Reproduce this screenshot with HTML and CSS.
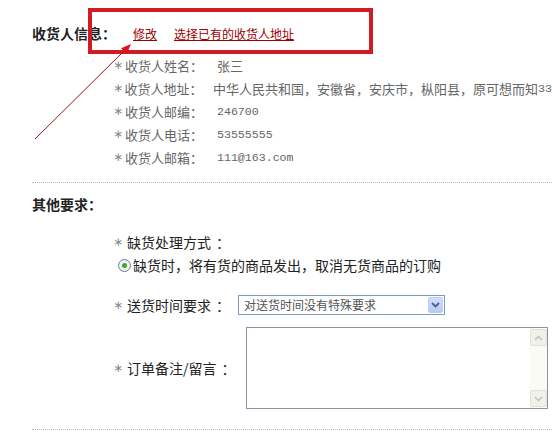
FILE: index.html
```html
<!DOCTYPE html>
<html lang="zh-CN">
<head>
	<meta charset="UTF-8">
	<title>订单信息</title>
	<link rel="stylesheet" href="styles.css">
</head>
<body>
	<div id="page">
		<div class="section">
			<div class="head">
				<span class="title">收货人信息：</span>
				<a href="javascript:;" class="link">修改</a>
				<a href="javascript:;" class="link">选择已有的收货人地址</a>
			</div>
			<ul class="info">
				<li><span class="star">∗</span><span class="key">收货人姓名：</span>张三</li>
				<li><span class="star">∗</span><span class="key">收货人地址：</span>中华人民共和国，安徽省，安庆市，枞阳县，原可想而知<span class="num">33</span></li>
				<li><span class="star">∗</span><span class="key">收货人邮编：</span><span class="num">246700</span></li>
				<li><span class="star">∗</span><span class="key">收货人电话：</span><span class="num">53555555</span></li>
				<li><span class="star">∗</span><span class="key">收货人邮箱：</span><span class="num">111@163.com</span></li>
			</ul>
		</div>
		<div class="section">
			<p class="title other">其他要求：</p>
			<div class="field lack-row">
				<span class="star">∗</span>缺货处理方式<span class="colon">：</span>
			</div>
			<div class="field radio-row">
				<span class="radio"><i></i></span>缺货时，将有货的商品发出，取消无货商品的订购
			</div>
			<div class="field time-row">
				<span class="label time"><span class="star">∗</span>送货时间要求<span class="colon">：</span></span>
				<div class="select">
					<span class="select-text">对送货时间没有特殊要求</span>
					<span class="select-btn">
						<svg width="9" height="6" viewBox="0 0 9 6"><path d="M1 1 L4.5 4.5 L8 1" fill="none" stroke="#4d6185" stroke-width="1.8"/></svg>
					</span>
				</div>
			</div>
			<div class="field note-row">
				<span class="label note"><span class="star">∗</span>订单备注/留言<span class="colon">：</span></span>
				<div class="textbox">
					<div class="text-area"></div>
					<div class="scroll">
						<span class="sbtn"><svg width="9" height="6" viewBox="0 0 9 6"><path d="M1 5 L4.5 1.5 L8 5" fill="none" stroke="#c4c4bc" stroke-width="1.6"/></svg></span>
						<span class="sbtn"><svg width="9" height="6" viewBox="0 0 9 6"><path d="M1 1 L4.5 4.5 L8 1" fill="none" stroke="#c4c4bc" stroke-width="1.6"/></svg></span>
					</div>
				</div>
			</div>
		</div>

		<!-- 标注：红框和箭头 -->
		<div class="mark-box"></div>
		<svg class="mark-arrow" width="552" height="436">
			<line x1="35" y1="139" x2="124" y2="51" stroke="#a01020" stroke-width="1"/>
			<polygon points="131,44 126.7,53.9 121.1,48.2" fill="#e0101a"/>
		</svg>
	</div>
</body>
</html>
```

FILE: styles.css
```css
* {
	margin: 0;
	padding: 0;
}
html, body {
	overflow: hidden;
}
body {
	background: #fff;
	font-family: "Noto Sans CJK SC", sans-serif;
	color: #333;
}
#page {
	position: relative;
	width: 552px;
	height: 436px;
	padding-top: 23px;
	box-sizing: border-box;
}
.section {
	margin-left: 32px;
	border-bottom: 1px dotted #bbb;
}
.head {
	display: flex;
	align-items: center;
	height: 20px;
}
.title {
	font-size: 14px;
	font-weight: bold;
	color: #222;
	line-height: 20px;
}
.link {
	font-size: 12px;
	color: #a00000;
	text-decoration: underline;
	margin-left: 17px;
}
.info {
	list-style: none;
	margin: 11px 0 13px 81px;
	font-size: 13px;
	color: #666;
}
.info li {
	height: 23px;
	line-height: 23px;
	white-space: nowrap;
	display: flex;
	align-items: center;
}
.star {
	display: inline-block;
	width: 12px;
	font-family: "DejaVu Sans", sans-serif;
	font-size: 12px;
	color: #888;
}
.key {
	display: inline-block;
	width: 92px;
}
.num {
	font-family: "Liberation Mono", monospace;
	font-size: 11.6px;
}
.other {
	margin-top: 11px;
}
.field {
	display: flex;
	align-items: center;
	margin-left: 81px;
	font-size: 14px;
	color: #222;
	line-height: 20px;
	white-space: nowrap;
}
.field .star {
	width: 14px;
}
.colon {
	margin-left: 5px;
}
.lack-row {
	margin-top: 18px;
}
.radio-row {
	margin-left: 86px;
	margin-top: 3px;
}
.radio {
	width: 11px;
	height: 11px;
	border: 1px solid #6a7e94;
	border-radius: 50%;
	background: #f4f4f0;
	display: flex;
	align-items: center;
	justify-content: center;
	margin-right: 2px;
}
.radio i {
	width: 5px;
	height: 5px;
	border-radius: 50%;
	background: #3aa83a;
}
.time-row {
	margin-top: 20px;
}
.label {
	display: flex;
	align-items: center;
}
.label.time {
	width: 125px;
}
.select {
	width: 207px;
	height: 20px;
	box-sizing: border-box;
	border: 1px solid #7f9db9;
	display: flex;
	align-items: center;
	justify-content: space-between;
}
.select-text {
	font-size: 12px;
	color: #555;
	padding-left: 5px;
}
.select-btn {
	width: 15px;
	height: 16px;
	margin-right: 1px;
	box-sizing: border-box;
	border: 1px solid #bccdf5;
	border-radius: 2px;
	background: linear-gradient(#d2defc, #b6c9f6);
	display: flex;
	align-items: center;
	justify-content: center;
}
.note-row {
	margin-top: 12px;
	margin-bottom: 20px;
}
.label.note {
	width: 133px;
}
.textbox {
	width: 302px;
	height: 82px;
	box-sizing: border-box;
	border: 1px solid #8495a8;
	display: flex;
}
.text-area {
	flex: 1;
}
.scroll {
	width: 17px;
	background: #fbfbf5;
	display: flex;
	flex-direction: column;
	justify-content: space-between;
	padding: 1px 0;
}
.sbtn {
	height: 17px;
	box-sizing: border-box;
	border: 1px solid #e2e2da;
	border-radius: 2px;
	background: #f1f1ea;
	display: flex;
	align-items: center;
	justify-content: center;
}
.mark-box {
	position: absolute;
	left: 88px;
	top: 8px;
	width: 285px;
	height: 46px;
	box-sizing: border-box;
	border: 4px solid #d01c22;
}
.mark-arrow {
	position: absolute;
	left: 0;
	top: 0;
}
```
